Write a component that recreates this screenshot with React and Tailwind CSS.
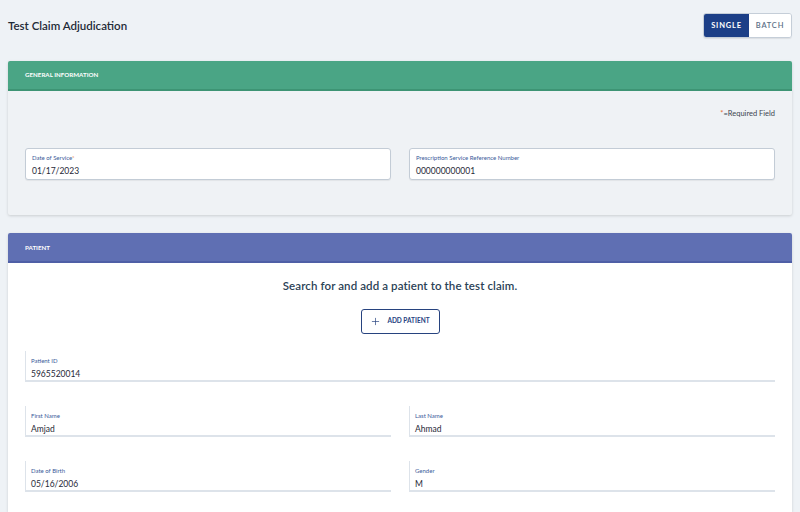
import { Plus } from "lucide-react";

function Field({ label, value, required }) {
  return (
    <div className="h-[31px] bg-white border-l border-b-2 border-[#dde3ea] pl-[5px] pt-[6px]">
      <div className="text-[6px] leading-[8px] text-[#3a5a9a]">
        {label}
        {required && <span className="text-[#e8703a]">*</span>}
      </div>
      <div className="text-[8.5px] leading-[12px] mt-[3px] text-[#1f2937]">{value}</div>
    </div>
  );
}

function BoxField({ label, value, required }) {
  return (
    <div className="h-[32px] bg-white border border-[#c3ccd6] rounded-[3px] pl-[6px] pt-[5px] shadow-[0_1px_1px_rgba(0,0,0,0.06)]">
      <div className="text-[6px] leading-[8px] text-[#3a5a9a]">
        {label}
        {required && <span className="text-[#e8703a]">*</span>}
      </div>
      <div className="text-[8.5px] leading-[12px] mt-[3px] text-[#1f2937]">{value}</div>
    </div>
  );
}

export default function App() {
  return (
    <div className="w-[800px] h-[512px] overflow-hidden bg-[#eef2f6] font-['Lato','Liberation_Sans',sans-serif]">
      <div className="flex items-center justify-between pl-[8px] pr-[8px] pt-[13px]">
        <h1 className="text-[11.5px] font-semibold text-[#1f2a37]">Test Claim Adjudication</h1>
        <div className="flex h-[25px] rounded-[3px] border border-[#c5ced8] overflow-hidden shadow-[0_1px_1px_rgba(0,0,0,0.08)]">
          <div className="w-[45px] bg-[#1c3f87] text-white text-[7.5px] font-bold tracking-[0.8px] flex items-center justify-center">SINGLE</div>
          <div className="w-[42px] bg-white text-[#5c6f86] text-[7.5px] font-semibold tracking-[0.8px] flex items-center justify-center">BATCH</div>
        </div>
      </div>

      <div className="mx-[8px] mt-[23px] rounded-[2px] shadow-[0_1px_3px_rgba(0,0,0,0.15)] bg-[#eff2f5]">
        <div className="h-[30px] bg-[#4aa585] border-b-2 border-[#3d9474] rounded-t-[2px] flex items-center pl-[17px] text-white text-[6.2px] font-bold">
          GENERAL INFORMATION
        </div>
        <div className="px-[17px] pt-[17px] pb-[35px]">
          <div className="text-right text-[7.5px] text-[#3d4550]">
            <span className="text-[#e8703a]">*</span>=Required Field
          </div>
          <div className="grid grid-cols-2 gap-[18px] mt-[29px]">
            <BoxField label="Date of Service" value="01/17/2023" required />
            <BoxField label="Prescription Service Reference Number" value="000000000001" />
          </div>
        </div>
      </div>

      <div className="mx-[8px] mt-[18px] rounded-t-[2px] shadow-[0_1px_3px_rgba(0,0,0,0.15)] bg-white">
        <div className="h-[30px] bg-[#5f6fb3] border-b-2 border-[#4f5fa6] rounded-t-[2px] flex items-center pl-[17px] text-white text-[6.2px] font-bold">
          PATIENT
        </div>
        <div className="px-[17px] pt-[14px] pb-[20px]">
          <div className="text-center text-[11.5px] font-semibold text-[#2b4256] tracking-[0.1px]">
            Search for and add a patient to the test claim.
          </div>
          <div className="flex justify-center mt-[14px]">
            <div className="h-[25px] w-[79px] border-[1.5px] border-[#27437f] rounded-[3px] flex items-center justify-center gap-[6px] text-[#27437f]">
              <Plus size={11} strokeWidth={1.5} />
              <span className="text-[6.5px] font-bold">ADD PATIENT</span>
            </div>
          </div>
          <div className="mt-[17px]">
            <Field label="Patient ID" value="5965520014" />
          </div>
          <div className="grid grid-cols-2 gap-[18px] mt-[24px]">
            <Field label="First Name" value="Amjad" />
            <Field label="Last Name" value="Ahmad" />
          </div>
          <div className="grid grid-cols-2 gap-[18px] mt-[24px]">
            <Field label="Date of Birth" value="05/16/2006" />
            <Field label="Gender" value="M" />
          </div>
        </div>
      </div>
    </div>
  );
}
